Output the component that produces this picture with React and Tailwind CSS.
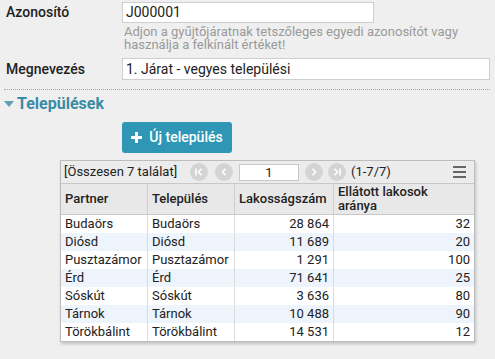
import React from "react";

const rows = [
  ["Budaörs", "Budaörs", "28 864", "32"],
  ["Diósd", "Diósd", "11 689", "20"],
  ["Pusztazámor", "Pusztazámor", "1 291", "100"],
  ["Érd", "Érd", "71 641", "25"],
  ["Sóskút", "Sóskút", "3 636", "80"],
  ["Tárnok", "Tárnok", "10 488", "90"],
  ["Törökbálint", "Törökbálint", "14 531", "12"],
];

function Circ({ children }) {
  return (
    <div className="w-[18px] h-[18px] rounded-full bg-[#d4d4d4] flex items-center justify-center">
      {children}
    </div>
  );
}

export default function App() {
  return (
    <div
      className="w-[495px] h-[359px] bg-[#efefef] overflow-hidden text-[#222]"
      style={{ fontFamily: "Roboto, 'Liberation Sans', sans-serif" }}
    >
      <div className="flex items-center pt-[2px]">
        <div className="w-[122px] pl-[6px] text-[14px] font-medium">Azonosító</div>
        <div className="w-[252px] h-[21px] bg-white border border-[#cfcfcf] px-[3px] text-[14px] leading-[19px]">
          J000001
        </div>
      </div>
      <div className="pl-[124px] pt-[2px] text-[13px] leading-[13px] text-[#9a9a9a] w-[470px]">
        Adjon a gyűjtőjáratnak tetszőleges egyedi azonosítót vagy használja a felkínált értéket!
      </div>
      <div className="flex items-center mt-[7px]">
        <div className="w-[122px] pl-[6px] text-[14px] font-medium">Megnevezés</div>
        <div className="w-[368px] h-[22px] bg-white border border-[#cfcfcf] px-[3px] text-[14px] leading-[20px]">
          1. Járat - vegyes települési
        </div>
      </div>
      <div className="mx-[4px] mt-[9px] w-[486px] border-t border-dotted border-[#aaa]"></div>
      <div className="flex items-center mt-[4px] pl-[4px] h-[20px]">
        <svg width="10" height="6" viewBox="0 0 10 6" className="mr-[3px]">
          <path d="M0 0 H10 L5 6 Z" fill="#5c9fb6" />
        </svg>
        <span className="text-[16px] font-bold text-[#3a8ca6]">Települések</span>
      </div>
      <div className="pl-[122px] mt-[8px]">
        <div className="w-[110px] h-[31px] rounded-[3px] bg-[#2f97b5] text-white flex items-center justify-center gap-[7px] text-[14px] font-medium">
          <svg width="11" height="11" viewBox="0 0 11 11">
            <path d="M4 0 H7 V4 H11 V7 H7 V11 H4 V7 H0 V4 H4 Z" fill="#fff" />
          </svg>
          <span>Új település</span>
        </div>
      </div>
      <div className="ml-[60px] mt-[7px] w-[415px] border border-[#bdbdbd] bg-white shadow-[1px_2px_3px_rgba(0,0,0,0.2)] text-[13px]">
        <div className="h-[23px] bg-[#ececec] border-b border-[#c8c8c8] flex items-center pl-[3px] pr-[8px]">
          <span className="w-[126px]">[Összesen 7 találat]</span>
          <div className="flex items-center gap-[7px]">
            <Circ>
              <svg width="8" height="8" viewBox="0 0 8 8">
                <path d="M1 0.5 V7.5 M6.5 0.8 L3.5 4 L6.5 7.2" stroke="#fff" strokeWidth="1.6" fill="none" />
              </svg>
            </Circ>
            <Circ>
              <svg width="8" height="8" viewBox="0 0 8 8">
                <path d="M5.5 0.8 L2.5 4 L5.5 7.2" stroke="#fff" strokeWidth="1.6" fill="none" />
              </svg>
            </Circ>
          </div>
          <div className="ml-[6px] w-[60px] h-[17px] bg-white border border-[#c8c8c8] text-center leading-[15px]">1</div>
          <div className="flex items-center gap-[5px] ml-[6px]">
            <Circ>
              <svg width="8" height="8" viewBox="0 0 8 8">
                <path d="M2.5 0.8 L5.5 4 L2.5 7.2" stroke="#fff" strokeWidth="1.6" fill="none" />
              </svg>
            </Circ>
            <Circ>
              <svg width="8" height="8" viewBox="0 0 8 8">
                <path d="M7 0.5 V7.5 M1.5 0.8 L4.5 4 L1.5 7.2" stroke="#fff" strokeWidth="1.6" fill="none" />
              </svg>
            </Circ>
          </div>
          <span className="ml-[5px]">(1-7/7)</span>
          <div className="ml-auto flex flex-col gap-[3px]">
            <div className="w-[13px] h-[2px] bg-[#666]"></div>
            <div className="w-[13px] h-[2px] bg-[#666]"></div>
            <div className="w-[13px] h-[2px] bg-[#666]"></div>
          </div>
        </div>
        <div className="grid grid-cols-[87px_87px_99px_1fr] bg-[#e8e8e8] border-b border-[#c8c8c8] h-[31px] font-medium text-[13px] leading-[14px]">
          <div className="border-r border-[#cfcfcf] flex items-center pl-[4px]">Partner</div>
          <div className="border-r border-[#cfcfcf] flex items-center pl-[4px]">Település</div>
          <div className="border-r border-[#cfcfcf] flex items-center pl-[4px]">Lakosságszám</div>
          <div className="flex items-center pl-[4px]">Ellátott lakosok<br />aránya</div>
        </div>
        {rows.map((r, i) => (
          <div
            key={i}
            className={`grid grid-cols-[87px_87px_99px_1fr] h-[18px] leading-[18px] ${i % 2 ? "bg-[#edf4fc]" : "bg-white"}`}
          >
            <div className="border-r border-[#dcdcdc] pl-[4px]">{r[0]}</div>
            <div className="border-r border-[#dcdcdc] pl-[4px]">{r[1]}</div>
            <div className="border-r border-[#dcdcdc] pr-[4px] text-right">{r[2]}</div>
            <div className="pr-[4px] text-right">{r[3]}</div>
          </div>
        ))}
      </div>
    </div>
  );
}
